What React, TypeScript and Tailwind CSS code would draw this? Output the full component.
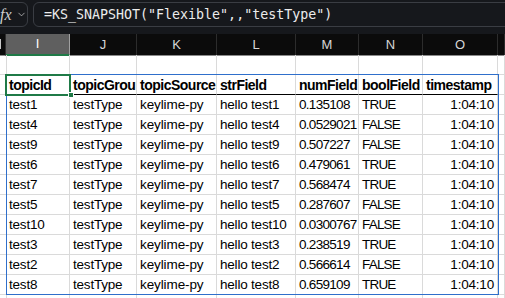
import { ChevronDown } from "lucide-react";

const cols = ["", "I", "J", "K", "L", "M", "N", "O", ""];
const widths = "grid-cols-[6px_64px_67px_80px_79px_63px_64px_75px_7px]";

const header = ["topicId", "topicGroup", "topicSource", "strField", "numField", "boolField", "timestamp"];

const rows = [
  ["test1", "testType", "keylime-py", "hello test1", "0.135108", "TRUE", "1:04:10"],
  ["test4", "testType", "keylime-py", "hello test4", "0.0529021", "FALSE", "1:04:10"],
  ["test9", "testType", "keylime-py", "hello test9", "0.507227", "FALSE", "1:04:10"],
  ["test6", "testType", "keylime-py", "hello test6", "0.479061", "TRUE", "1:04:10"],
  ["test7", "testType", "keylime-py", "hello test7", "0.568474", "TRUE", "1:04:10"],
  ["test5", "testType", "keylime-py", "hello test5", "0.287607", "FALSE", "1:04:10"],
  ["test10", "testType", "keylime-py", "hello test10", "0.0300767", "FALSE", "1:04:10"],
  ["test3", "testType", "keylime-py", "hello test3", "0.238519", "TRUE", "1:04:10"],
  ["test2", "testType", "keylime-py", "hello test2", "0.566614", "FALSE", "1:04:10"],
  ["test8", "testType", "keylime-py", "hello test8", "0.659109", "TRUE", "1:04:10"],
];

// narrow font in the original, so squeeze some columns a bit
const spacing = [
  "tracking-[-0.2px]",
  "tracking-[-0.2px]",
  "tracking-[-0.1px]",
  "tracking-[-0.2px]",
  "tracking-[-0.7px]",
  "tracking-[-0.8px]",
  "tracking-[-0.2px]",
];

function Cell({
  text = "",
  bold = false,
  right = false,
  dark = false,
  track = "",
}: {
  text?: string;
  bold?: boolean;
  right?: boolean;
  dark?: boolean;
  track?: string;
}) {
  return (
    <div
      className={`h-[20px] overflow-hidden whitespace-nowrap border-r border-b ${dark ? "border-b-black" : "border-b-[#dadada]"} border-r-[#dadada] px-[3px] leading-[20px] ${
        bold ? "text-[14px] font-bold tracking-[-0.5px]" : `text-[13.5px] ${track}`
      } ${right ? "text-right" : ""}`}
    >
      {text}
    </div>
  );
}

export default function App() {
  return (
    <div className="relative h-[298px] w-[505px] overflow-hidden bg-white font-['Liberation_Sans',Arial,sans-serif] text-[14px] text-black">
      {/* formula bar */}
      <div className="flex h-[34px] items-start gap-[5px] bg-[#16181c] pt-[2px]">
        <div className="-ml-[10px] flex h-[25px] w-[38px] shrink-0 items-center gap-[4px] rounded-[6px] border border-[#3a3d43] pl-[9px] text-[#cfcfcf]">
          <span className="font-['Liberation_Serif',serif] text-[16px] italic leading-none">fx</span>
          <ChevronDown size={11} strokeWidth={1.6} />
        </div>
        <div className="-mr-[10px] flex h-[25px] flex-1 items-center rounded-[6px] border border-[#3a3d43] pl-[10px] font-['DejaVu_Sans_Mono',monospace] text-[13.3px] whitespace-nowrap text-[#ececec]">
          =KS_SNAPSHOT("Flexible",,"testType")
        </div>
      </div>

      {/* column headers */}
      <div className={`grid ${widths} h-[21px] bg-[#0b0b0b] text-[13px] text-[#d6d6d6]`}>
        {cols.map((c, i) => (
          <div
            key={i}
            className={`flex items-center justify-center border-r ${
              i === 1
                ? "border-b-2 border-b-[#1f7a47] border-r-[#a0a0a0] bg-[#5f5f5f] text-white"
                : "border-b border-b-[#8a8a8a] border-r-[#2c2c2c]"
            }`}
          >
            {i === 0 ? <span className="ml-[-4px] h-[10px] w-[1px] bg-[#c8c8c8]" /> : c}
          </div>
        ))}
      </div>

      {/* sheet rows */}
      <div className={`grid ${widths}`}>
        {cols.map((_, i) => (
          <Cell key={i} />
        ))}
        <Cell />
        {header.map((h, i) => (
          <Cell key={i} text={h} bold dark />
        ))}
        <Cell />
        {rows.map((r, ri) => (
          <div key={ri} className="contents">
            <Cell />
            {r.map((v, i) => (
              <Cell key={i} text={v} right={i === 6} track={spacing[i]} />
            ))}
            <Cell />
          </div>
        ))}
        {cols.map((_, i) => (
          <Cell key={i} />
        ))}
      </div>

      {/* table outline */}
      <div className="pointer-events-none absolute top-[74px] left-[6px] h-[221px] w-[493px] border border-[#2f6fcb]" />
      {/* active cell */}
      <div className="pointer-events-none absolute top-[74px] left-[5px] h-[22px] w-[66px] border-2 border-[#1f7a47]" />
      <div className="pointer-events-none absolute top-[92px] left-[68px] h-[6px] w-[6px] border border-white bg-[#1f7a47]" />
    </div>
  );
}
